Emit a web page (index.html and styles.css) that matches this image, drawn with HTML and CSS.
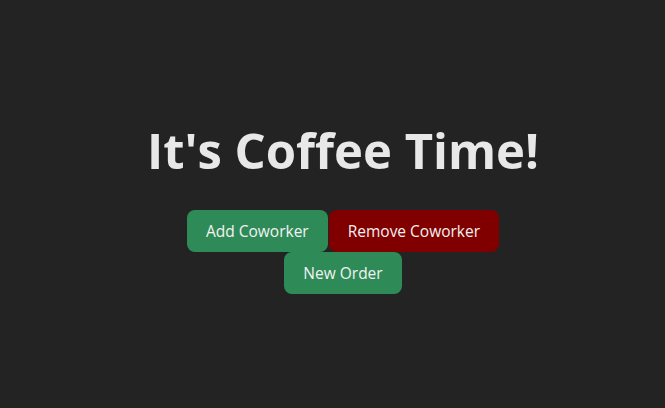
FILE: index.html
```html
<!DOCTYPE html>
<html>
<head>
<meta charset="utf-8">
<link rel="stylesheet" href="styles.css">
</head>
<body>
<main class="app">
  <h1 class="title">It's Coffee Time!</h1>
  <div class="actions">
    <button class="btn btn-green">Add Coworker</button>
    <button class="btn btn-red">Remove Coworker</button>
    <button class="btn btn-green">New Order</button>
  </div>
</main>
</body>
</html>
```

FILE: styles.css
```css
html, body {
  margin: 0;
  padding: 0;
  background: #232323;
  height: 100%;
}
.app {
  display: flex;
  flex-direction: column;
  align-items: center;
  padding-top: 118px;
  padding-left: 21px;
  font-family: "Open Sans", "Noto Sans", sans-serif;
}
.title {
  margin: 0;
  color: #e8e8e8;
  font-size: 49px;
  font-weight: 700;
  line-height: 64px;
  letter-spacing: 0;
}
.actions {
  margin-top: 28px;
  width: 320px;
  display: flex;
  flex-wrap: wrap;
  justify-content: center;
}
.btn {
  border: none;
  border-radius: 8px;
  height: 42px;
  padding: 0 19px;
  font-family: inherit;
  font-size: 15.5px;
  color: #f2f2f2;
  cursor: pointer;
  margin: 0 0.5px;
}
.btn-green { background: #2e8b57; }
.btn-red { background: #800000; }
```
